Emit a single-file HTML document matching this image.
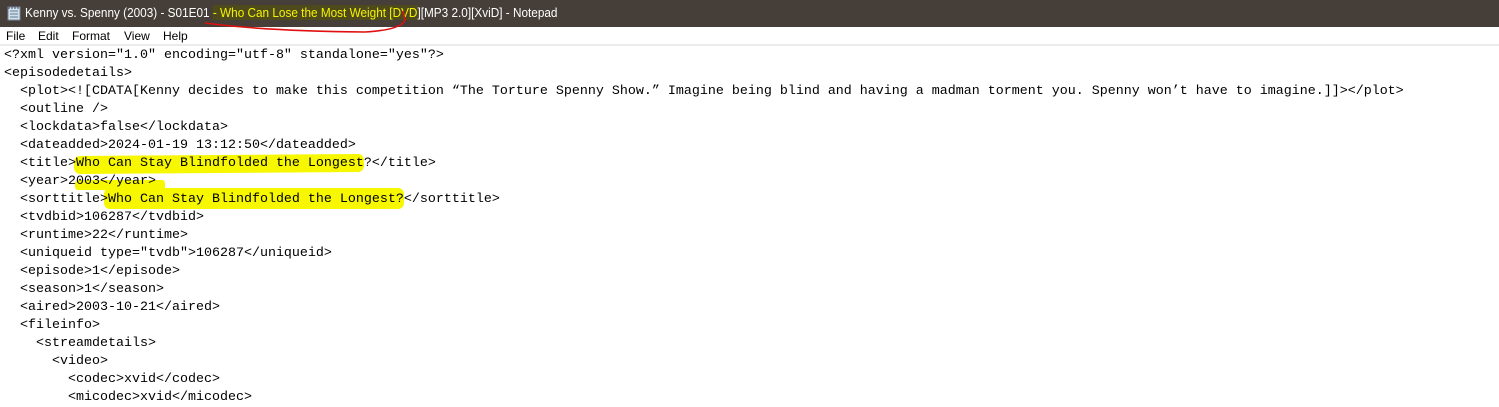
<html><head><style>
body{margin:0;width:1499px;height:403px;overflow:hidden;background:#fff;position:relative;font-family:"Liberation Sans",sans-serif}
.tb{position:absolute;left:0;top:0;width:1499px;height:27px;background:#463e38;color:#fff;font-size:12.8px;line-height:25px}
.tb span.t{position:absolute;left:25px;top:0;white-space:pre;transform:scaleX(0.92);transform-origin:0 0}
.y{color:#f4f400;background:#4e4a1c}
.mb{position:absolute;top:27px;left:0;width:1499px;height:17px;font-size:12px;line-height:18px;border-bottom:2px solid #ececec}
.mb span{position:absolute}
pre{position:absolute;left:4px;top:47px;margin:0;font-family:"Liberation Mono",monospace;font-size:13.33px;line-height:18px;color:#000}
.hl{position:absolute;background:#f7f700;border-radius:6px}
</style></head><body>
<div class="tb">
<svg style="position:absolute;left:7px;top:5px" width="14" height="16"><rect x="1" y="2" width="12" height="13" fill="#cfe0ee" stroke="#7a8a9a"/><path d="M3 6h8M3 9h8M3 12h8" stroke="#6a7a8a"/><path d="M2 1v3M5 1v3M8 1v3M11 1v3" stroke="#556"/></svg>
<span class="t">Kenny vs. Spenny (2003) - S01E01 <span class="y">- Who Can Lose the Most Weight [DVD</span>][MP3 2.0][XviD] - Notepad</span>
</div>
<svg style="position:absolute;left:175px;top:6px" width="240" height="28"><path d="M30 17 Q90 25 190 26 Q226 24 230 14 L228 5" fill="none" stroke="#e01010" stroke-width="1.6"/></svg>
<div class="mb"><span style="left:6px">File</span><span style="left:38px">Edit</span><span style="left:72px">Format</span><span style="left:124px">View</span><span style="left:163px">Help</span></div>
<div class="hl" style="left:74px;top:155px;width:290px;height:18px;transform:rotate(-0.4deg)"></div>
<div class="hl" style="left:75px;top:180px;width:90px;height:10px;border-radius:3px"></div>
<div class="hl" style="left:104px;top:188px;width:300px;height:21px"></div>
<pre>&lt;?xml version="1.0" encoding="utf-8" standalone="yes"?&gt;
&lt;episodedetails&gt;
  &lt;plot&gt;&lt;![CDATA[Kenny decides to make this competition “The Torture Spenny Show.” Imagine being blind and having a madman torment you. Spenny won’t have to imagine.]]&gt;&lt;/plot&gt;
  &lt;outline /&gt;
  &lt;lockdata&gt;false&lt;/lockdata&gt;
  &lt;dateadded&gt;2024-01-19 13:12:50&lt;/dateadded&gt;
  &lt;title&gt;Who Can Stay Blindfolded the Longest?&lt;/title&gt;
  &lt;year&gt;2003&lt;/year&gt;
  &lt;sorttitle&gt;Who Can Stay Blindfolded the Longest?&lt;/sorttitle&gt;
  &lt;tvdbid&gt;106287&lt;/tvdbid&gt;
  &lt;runtime&gt;22&lt;/runtime&gt;
  &lt;uniqueid type="tvdb"&gt;106287&lt;/uniqueid&gt;
  &lt;episode&gt;1&lt;/episode&gt;
  &lt;season&gt;1&lt;/season&gt;
  &lt;aired&gt;2003-10-21&lt;/aired&gt;
  &lt;fileinfo&gt;
    &lt;streamdetails&gt;
      &lt;video&gt;
        &lt;codec&gt;xvid&lt;/codec&gt;
        &lt;micodec&gt;xvid&lt;/micodec&gt;
</pre>
</body></html>
